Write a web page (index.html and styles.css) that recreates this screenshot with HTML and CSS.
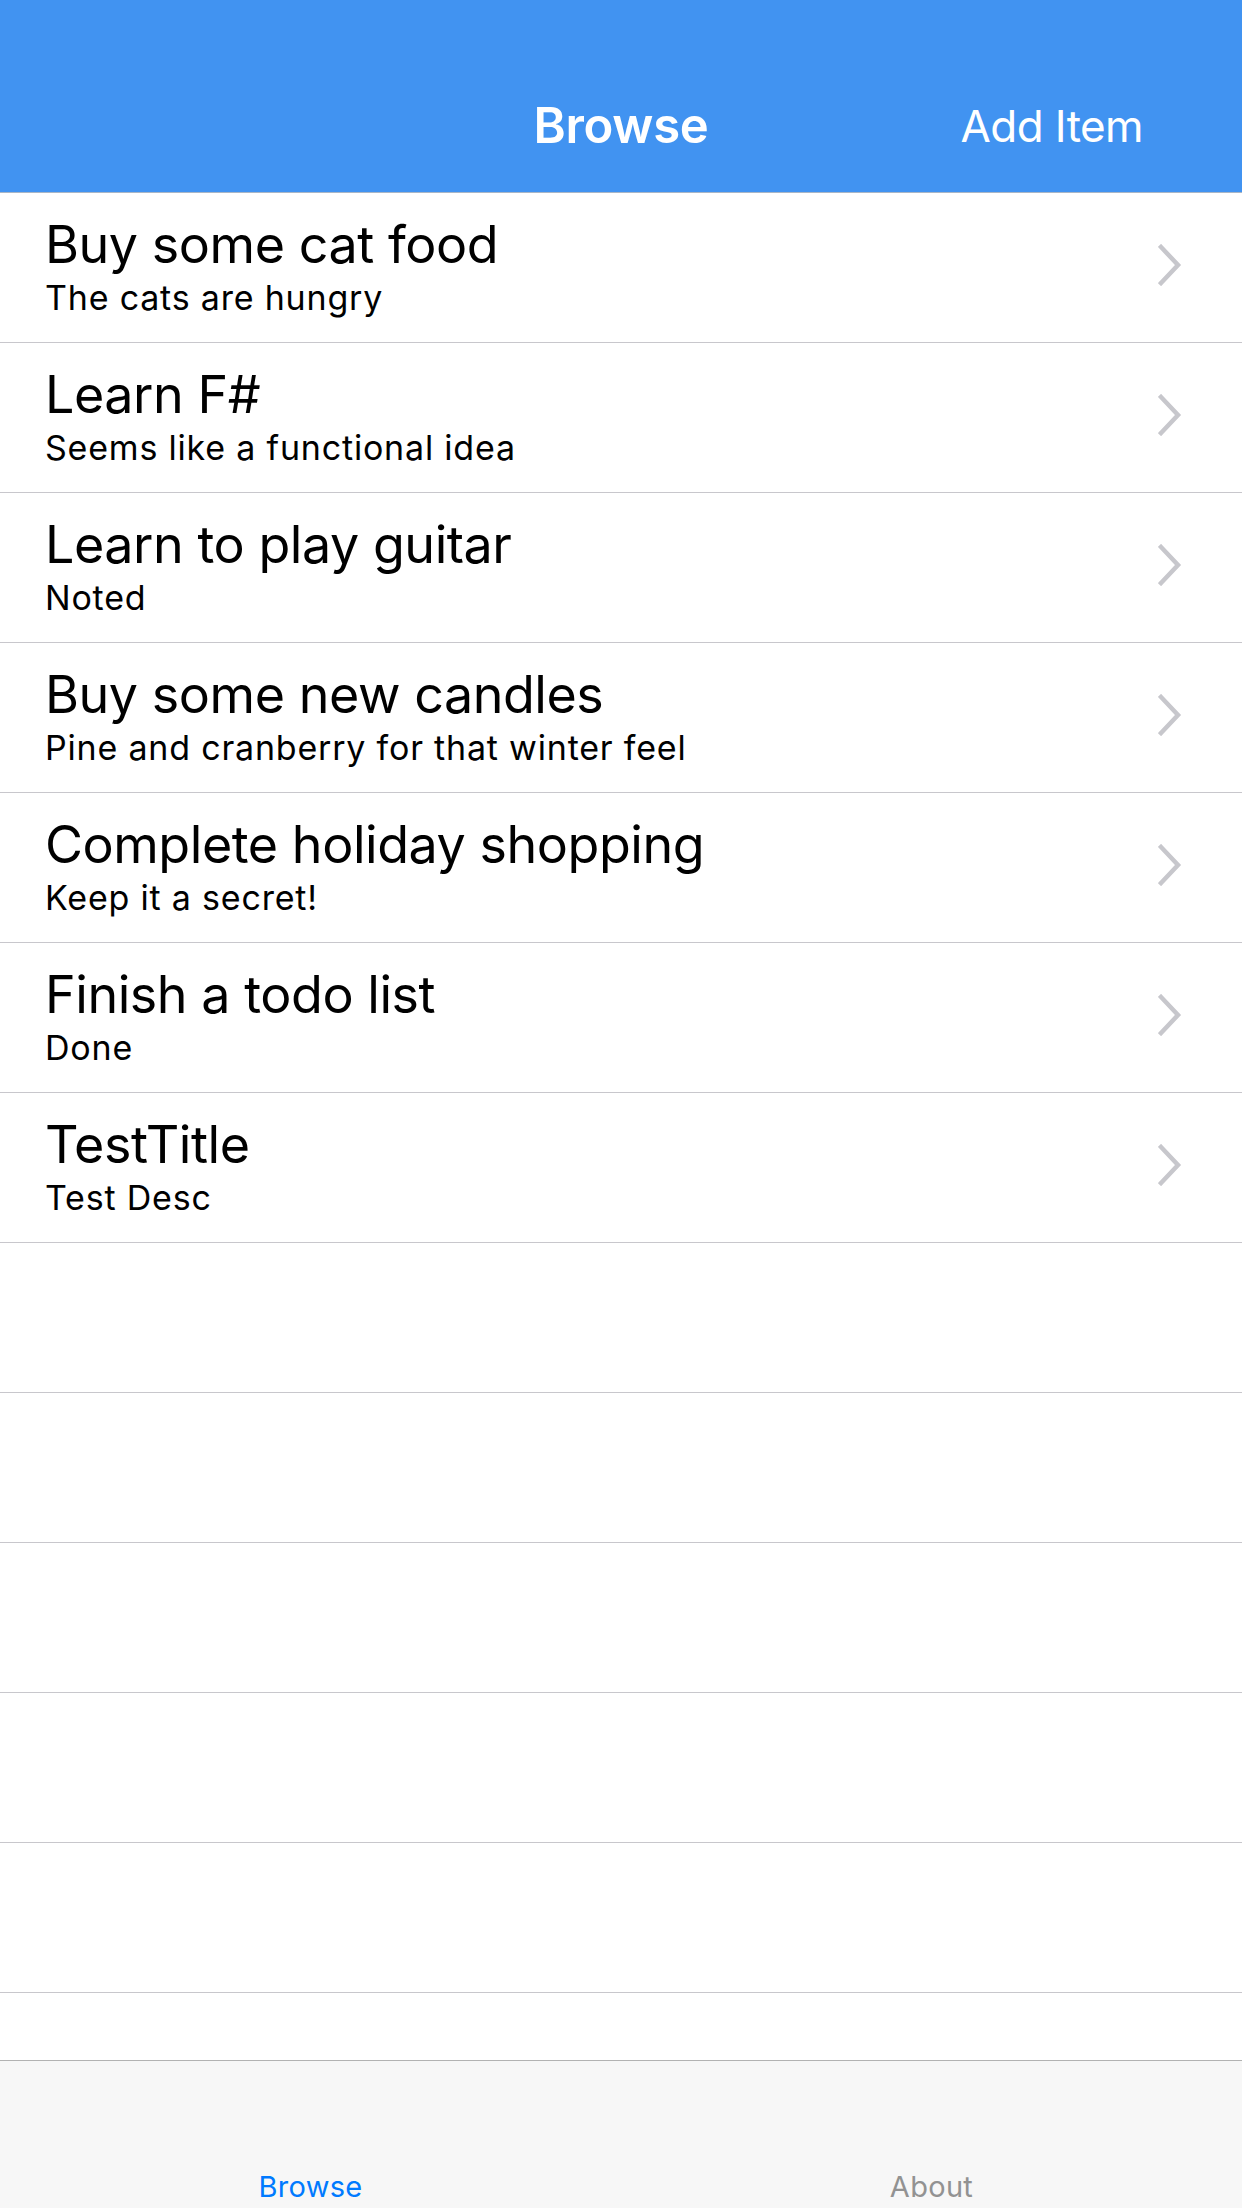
FILE: index.html
```html
<!DOCTYPE html>
<html>
<head>
<meta charset="utf-8">
<link rel="stylesheet" href="styles.css">
</head>
<body>
<div class="app">
  <header class="navbar">
    <div class="nav-side"></div>
    <div class="nav-title">Browse</div>
    <div class="nav-side nav-right"><span class="nav-action">Add Item</span></div>
  </header>
  <main class="list">
    <div class="row"><div class="row-text"><div class="row-title">Buy some cat food</div><div class="row-sub">The cats are hungry</div></div><svg class="chev" viewBox="0 0 24 42"><path d="M3 3 L20 21 L3 39"/></svg></div>
    <div class="row"><div class="row-text"><div class="row-title">Learn F#</div><div class="row-sub">Seems like a functional idea</div></div><svg class="chev" viewBox="0 0 24 42"><path d="M3 3 L20 21 L3 39"/></svg></div>
    <div class="row"><div class="row-text"><div class="row-title">Learn to play guitar</div><div class="row-sub">Noted</div></div><svg class="chev" viewBox="0 0 24 42"><path d="M3 3 L20 21 L3 39"/></svg></div>
    <div class="row"><div class="row-text"><div class="row-title">Buy some new candles</div><div class="row-sub">Pine and cranberry for that winter feel</div></div><svg class="chev" viewBox="0 0 24 42"><path d="M3 3 L20 21 L3 39"/></svg></div>
    <div class="row"><div class="row-text"><div class="row-title">Complete holiday shopping</div><div class="row-sub">Keep it a secret!</div></div><svg class="chev" viewBox="0 0 24 42"><path d="M3 3 L20 21 L3 39"/></svg></div>
    <div class="row"><div class="row-text"><div class="row-title">Finish a todo list</div><div class="row-sub">Done</div></div><svg class="chev" viewBox="0 0 24 42"><path d="M3 3 L20 21 L3 39"/></svg></div>
    <div class="row"><div class="row-text"><div class="row-title">TestTitle</div><div class="row-sub">Test Desc</div></div><svg class="chev" viewBox="0 0 24 42"><path d="M3 3 L20 21 L3 39"/></svg></div>
    <div class="row empty"></div>
    <div class="row empty"></div>
    <div class="row empty"></div>
    <div class="row empty"></div>
    <div class="row empty"></div>
    <div class="row empty"></div>
  </main>
  <nav class="tabbar">
    <div class="tab active">Browse</div>
    <div class="tab">About</div>
  </nav>
</div>
</body>
</html>
```

FILE: styles.css
```css
* { box-sizing: border-box; }
html, body { margin: 0; padding: 0; background: #fff; }
body { font-family: Inter, "Noto Sans", "Liberation Sans", sans-serif; }
.app { width: 1242px; height: 2208px; display: flex; flex-direction: column; overflow: hidden; }
.navbar {
  height: 193px; flex: none;
  background: #4193f1;
  border-bottom: 1px solid #a9b6c6;
  display: grid; grid-template-columns: 1fr auto 1fr;
  align-items: end;
  padding-bottom: 36px;
  color: #fff;
}
.nav-title { font-size: 49px; font-weight: 600; line-height: 60px; letter-spacing: -0.3px; }
.nav-right { display: flex; justify-content: flex-end; padding-right: 99px; }
.nav-action { font-size: 44px; font-weight: 400; line-height: 60px; letter-spacing: -0.6px; }
.list { flex: 1; overflow: hidden; }
.row {
  height: 150px;
  border-bottom: 1.5px solid #c8c7cc;
  display: flex; align-items: center;
  padding: 0 60px 0 45px;
}
.row-text { flex: 1; display: flex; flex-direction: column; padding-bottom: 0; }
.row-title { font-size: 52px; line-height: 60px; color: #000; letter-spacing: -0.45px; }
.row-sub { font-size: 34px; line-height: 46px; color: #000; letter-spacing: 0.8px; }
.chev { width: 24px; height: 42px; flex: none; margin-bottom: 5px; }
.chev path { fill: none; stroke: #c7c7cc; stroke-width: 4.5; stroke-linecap: square; }
.tabbar {
  height: 148px; flex: none;
  background: #f7f7f7;
  border-top: 1.5px solid #b2b2b2;
  display: grid; grid-template-columns: 1fr 1fr;
  align-items: end;
}
.tab { text-align: center; font-size: 29px; line-height: 36px; color: #929292; padding-bottom: 3px; letter-spacing: 0.3px; }
.tab.active { color: #007aff; }
```
